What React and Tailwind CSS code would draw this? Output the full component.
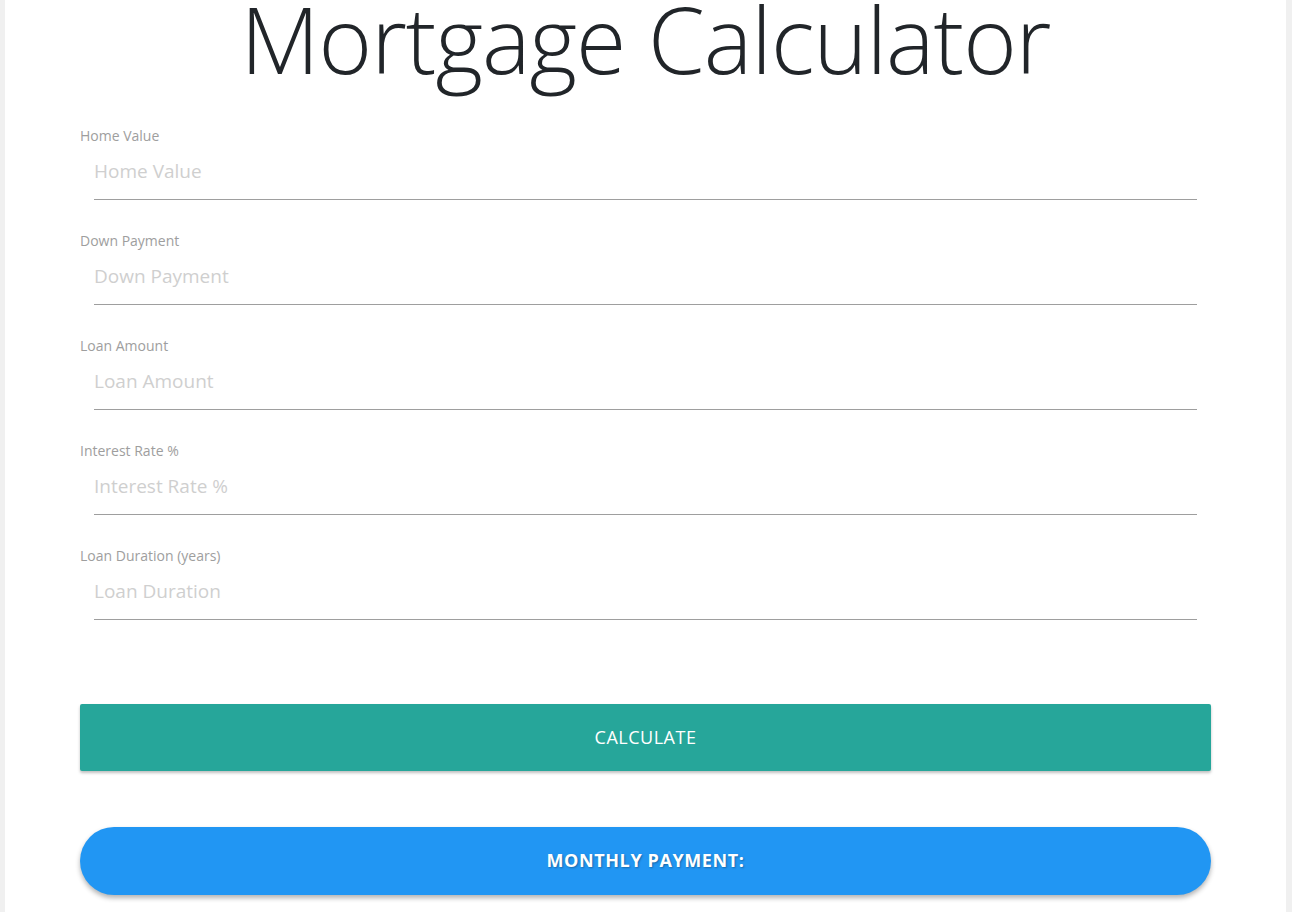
import React from "react";

const fields = [
  { label: "Home Value", ph: "Home Value" },
  { label: "Down Payment", ph: "Down Payment" },
  { label: "Loan Amount", ph: "Loan Amount" },
  { label: "Interest Rate %", ph: "Interest Rate %" },
  { label: "Loan Duration (years)", ph: "Loan Duration" },
];

export default function App() {
  return (
    <div
      className="w-[1292px] h-[912px] overflow-hidden bg-[#f0f0f0] flex"
      style={{ fontFamily: '"Open Sans", "Noto Sans", sans-serif' }}
    >
      <div className="ml-[5px] w-[1281px] h-full bg-white px-[75px]">
        <h1 className="text-center text-[91.5px] font-light leading-none text-[#212529] -mt-[7px] tracking-[-1px]">
          Mortgage Calculator
        </h1>
        <div className="mt-[41px]">
          {fields.map((f) => (
            <div key={f.label} className="mb-[31px]">
              <div className="h-[20px] text-[14px] leading-[20px] text-[#9e9e9e]">
                {f.label}
              </div>
              <div className="mt-[7px] mx-[14px] h-[47px] border-b border-[#9e9e9e] flex items-center pb-[8px]">
                <input
                  placeholder={f.ph}
                  className="w-full bg-transparent outline-none text-[19px] text-[#333] placeholder:text-[#cfcfcf]"
                  style={{ fontFamily: '"Open Sans", "Noto Sans", sans-serif' }}
                />
              </div>
            </div>
          ))}
        </div>
        <button className="mt-[84px] w-full h-[67px] rounded-[2px] bg-[#26a69a] text-white text-[18px] tracking-[0.5px] uppercase shadow-[0_2px_3px_rgba(0,0,0,0.25)] flex items-center justify-center">
          Calculate
        </button>
        <div className="mt-[56px] w-full h-[68px] rounded-full bg-[#2196f3] text-white text-[18px] tracking-[0.6px] font-bold flex items-center justify-center shadow-[0_3px_5px_rgba(0,0,0,0.3)] [text-shadow:1px_1px_2px_rgba(0,0,0,0.3)]">
          MONTHLY PAYMENT:
        </div>
      </div>
    </div>
  );
}
